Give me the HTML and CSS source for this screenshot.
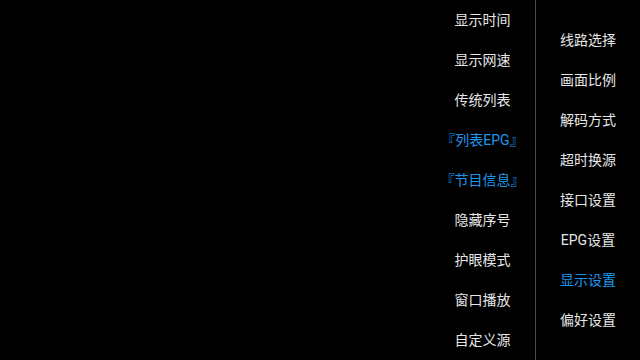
FILE: index.html
```html
<!DOCTYPE html>
<html lang="zh-CN">
<head>
<meta charset="utf-8">
<link rel="stylesheet" href="styles.css">
</head>
<body>
<div class="screen">
  <ul class="menu sub">
    <li>显示时间</li>
    <li>显示网速</li>
    <li>传统列表</li>
    <li class="on">『列表EPG』</li>
    <li class="on">『节目信息』</li>
    <li>隐藏序号</li>
    <li>护眼模式</li>
    <li>窗口播放</li>
    <li>自定义源</li>
  </ul>
  <ul class="menu main">
    <li>线路选择</li>
    <li>画面比例</li>
    <li>解码方式</li>
    <li>超时换源</li>
    <li>接口设置</li>
    <li>EPG设置</li>
    <li class="on">显示设置</li>
    <li>偏好设置</li>
  </ul>
</div>
</body>
</html>
```
FILE: styles.css
```css
html, body {
  margin: 0;
  padding: 0;
  background: #000;
}
.screen {
  width: 640px;
  height: 360px;
  display: flex;
  justify-content: flex-end;
  background: #000;
  overflow: hidden;
  font-family: Roboto, "Noto Sans CJK SC", sans-serif;
  font-size: 14px;
  color: #e6e6e6;
}
.menu {
  list-style: none;
  margin: 0;
  padding: 0;
  width: 105px;
}
.menu li {
  height: 40px;
  line-height: 40px;
  text-align: center;
  white-space: nowrap;
}
.menu li.on {
  color: #1b98ee;
}
.main {
  border-left: 1px solid #4a4a4a;
  width: 104px;
  padding-top: 20px;
}
```
